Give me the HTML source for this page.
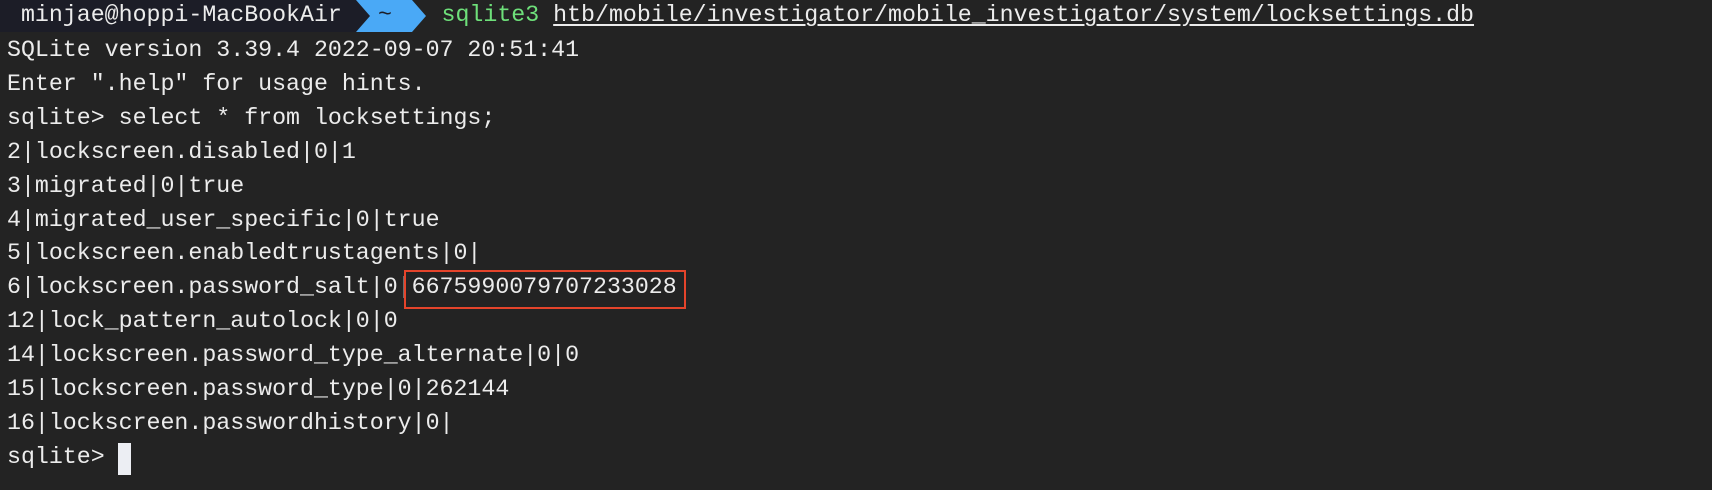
<!DOCTYPE html>
<html><head><meta charset="utf-8"><style>
html,body{margin:0;padding:0;background:#232323;width:1712px;height:490px;overflow:hidden}
.t{position:absolute;left:7px;top:0px;font-family:"Liberation Mono",monospace;font-size:23.25px;line-height:33.9px;color:#ececec;white-space:pre}
.bar{position:absolute;left:0;top:0;height:32px;width:356px;background:#1c1d27}
.arrow{position:absolute;top:0}
.g{color:#6ee07a;margin-left:2px}
.u{text-decoration:underline;text-underline-offset:3px}
.box{position:absolute;left:404px;top:270px;width:278px;height:35px;border:2px solid #e5442b}
.cur{position:absolute;left:118px;top:443px;width:13px;height:32px;background:#eceef3}
</style></head><body>
<div class="bar"></div>
<svg class="arrow" width="440" height="32" style="left:0"><polygon points="356,0 370,16 356,32" fill="#1c1d27"/><polygon points="356,0 412,0 426,16 412,32 356,32 370,16" fill="#4aa9f6"/></svg>
<div class="t" style="top:-1px"> minjae@hoppi-MacBookAir       <span class="g">sqlite3</span> <span class="u">htb/mobile/investigator/mobile_investigator/system/locksettings.db</span></div>
<div class="t" style="top:34px">SQLite version 3.39.4 2022-09-07 20:51:41
Enter ".help" for usage hints.
sqlite&gt; select * from locksettings;
2|lockscreen.disabled|0|1
3|migrated|0|true
4|migrated_user_specific|0|true
5|lockscreen.enabledtrustagents|0|
6|lockscreen.password_salt|0|6675990079707233028
12|lock_pattern_autolock|0|0
14|lockscreen.password_type_alternate|0|0
15|lockscreen.password_type|0|262144
16|lockscreen.passwordhistory|0|
sqlite&gt; </div>
<div style="position:absolute;left:378px;top:-1px;font-family:'Liberation Mono',monospace;font-size:23.25px;line-height:33.9px;color:#1c1d27">~</div>
<div class="box"></div>
<div class="cur"></div>
</body></html>
